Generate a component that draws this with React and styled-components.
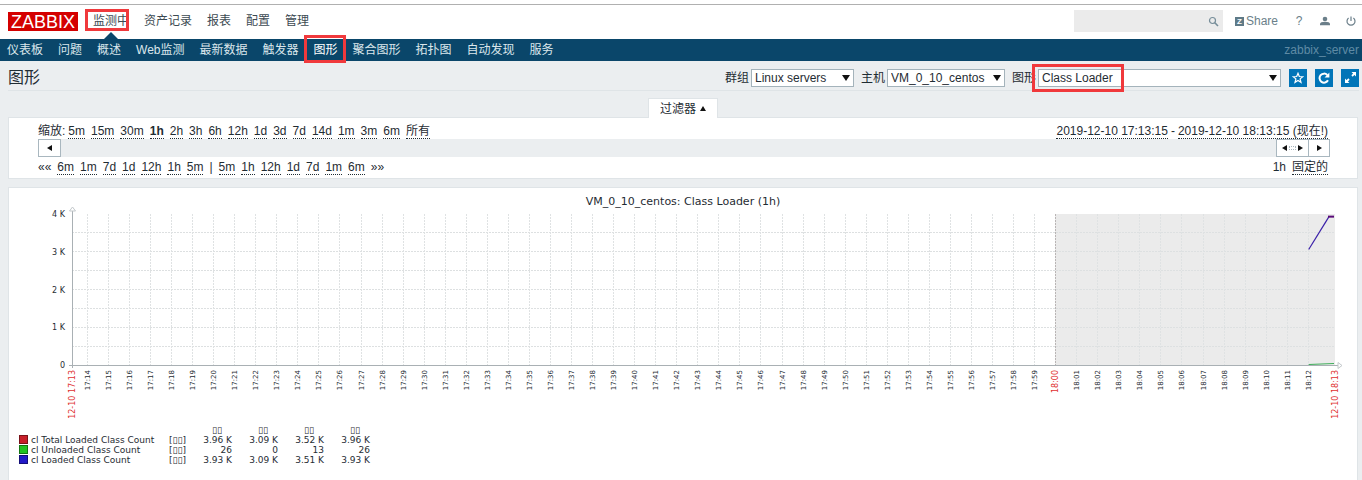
import React, { useLayoutEffect, useRef, useState } from 'react';
import styled, { createGlobalStyle, css } from 'styled-components';

const GlobalStyle = createGlobalStyle`
  *, *::before, *::after { box-sizing: border-box; }
  body {
    margin: 0;
    background: #ebeef0;
    color: #1f2c33;
    font: 12px/14px "Liberation Sans", "Noto Sans CJK SC", sans-serif;
  }
  button, input, select { font: inherit; color: inherit; margin: 0; }
  a { color: inherit; text-decoration: none; }
`;

const marked = css`
  position: relative;
  &::after {
    content: '';
    position: absolute;
    inset: ${(p) => p.$mark};
    border: 3px solid #f0393c;
    pointer-events: none;
    z-index: 2;
  }
`;

const Header = styled.header`
  display: flex;
  align-items: center;
  height: 39px;
  padding: 1px 6px 2px 8px;
  background: #fff;
  border-top: 4px solid #fff;
  box-shadow: inset 0 1px 0 #b0b0b0;
`;

const Logo = styled.a`
  width: 70px;
  height: 19px;
  margin-right: 15px;
  background: #d40000;
  color: #fff;
  font-size: 18px;
  line-height: 20px;
  text-align: center;
`;

const MainNav = styled.nav`
  display: flex;
  gap: 15px;
  flex: 1;
`;

const MainLink = styled.a`
  color: #3c4a52;
  line-height: 16px;
  ${(p) => p.$mark && marked}
  ${(p) => p.$active && css`
    &::before {
      content: '';
      position: absolute;
      left: 50%;
      top: 19px;
      margin-left: -7px;
      border: 7px solid transparent;
      border-top: 0;
      border-bottom-color: #0a466a;
    }
  `}
`;

const Search = styled.form`
  display: flex;
  align-items: center;
  width: 149px;
  height: 22px;
  padding-right: 4px;
  background: #ebebeb;
`;

const SearchInput = styled.input`
  flex: 1;
  min-width: 0;
  height: 22px;
  border: 0;
  background: none;
  outline: none;
`;

const PlainButton = styled.button`
  display: flex;
  padding: 0;
  border: 0;
  background: none;
  color: #768d99;
`;

const UserLinks = styled.div`
  display: flex;
  align-items: center;
  gap: 16px;
  padding-left: 12px;
  color: #6b7f8a;
`;

const UserLink = styled.a`
  display: flex;
  align-items: center;
  gap: 2px;
  min-width: 10px;
  justify-content: center;
`;

const ZBadge = styled.span`
  width: 9px;
  height: 9px;
  background: #5f7a87;
  color: #fff;
  font-size: 8px;
  font-weight: bold;
  line-height: 9px;
  text-align: center;
`;

const SubNav = styled.nav`
  display: flex;
  align-items: center;
  gap: 15px;
  height: 22px;
  padding: 0 3px 0 7px;
  background: #0a466a;
  color: #dbe6ec;
`;

const SubLink = styled.a`
  line-height: 22px;
  color: ${(p) => (p.$mark ? '#fff' : 'inherit')};
  ${(p) => p.$mark && marked}
`;

const ServerName = styled.span`
  margin-left: auto;
  color: #5f8ba5;
`;

const TitleBar = styled.div`
  display: flex;
  align-items: center;
  gap: 7px;
  height: 30px;
  margin: 0 3px 0 8px;
  padding-top: 4px;
  border-bottom: 1px solid #dfe4e7;
`;

const Title = styled.h1`
  flex: 1;
  margin: 0;
  font-size: 16px;
  font-weight: normal;
  line-height: 24px;
`;

const Field = styled.div`
  display: flex;
  align-items: center;
  gap: 2px;
`;

const SelectBox = styled.div`
  width: ${(p) => p.$width}px;
  position: relative;
  &::before {
    content: '';
    position: absolute;
    right: 4px;
    top: 6px;
    border: 4px solid transparent;
    border-top: 6px solid #111;
    border-bottom: 0;
    pointer-events: none;
  }
  ${(p) => p.$mark && marked}
`;

const Select = styled.select`
  display: block;
  width: 100%;
  height: 18px;
  padding: 0 16px 0 3px;
  border: 1px solid #a4b3bb;
  border-radius: 0;
  background: #fff;
  appearance: none;
  line-height: 16px;
`;

const Actions = styled.div`
  display: flex;
  gap: 8px;
  padding-left: 1px;
`;

const IconButton = styled.button`
  display: flex;
  align-items: center;
  justify-content: center;
  width: 18px;
  height: 18px;
  padding: 0;
  border: 0;
  background: #0275b8;
  color: #fff;
`;

const TabRow = styled.div`
  display: flex;
  justify-content: center;
  padding: 7px 0 0 4px;
`;

const FilterTab = styled.button`
  display: flex;
  align-items: center;
  justify-content: center;
  gap: 4px;
  width: 70px;
  height: 20px;
  margin-bottom: -1px;
  padding: 0;
  border: 1px solid #dfe4e7;
  border-bottom: 0;
  background: #fff;
`;

const UpArrow = styled.span`
  border: 3px solid transparent;
  border-top: 0;
  border-bottom: 5px solid #111;
`;

const Panel = styled.section`
  margin: 0 4px 0 8px;
  background: #fff;
  border: 1px solid #dfe4e7;
`;

const FilterPanel = styled(Panel)`
  padding: 6px 29px 3px 29px;
`;

const Row = styled.div`
  display: flex;
  justify-content: space-between;
  height: 15px;
`;

const LinkGroup = styled.div`
  display: flex;
  gap: ${(p) => (p.$tight ? 3 : 6)}px;
`;

const Prefix = styled.span`
  margin-right: -3px;
`;

const TimeLink = styled.a`
  height: 15px;
  border-bottom: 1px dotted #1f2c33;
  font-weight: ${(p) => (p.$selected ? 'bold' : 'normal')};
`;

const Scrollbar = styled.div`
  display: flex;
  justify-content: space-between;
  height: 18px;
  margin: 0 -2px 3px 1px;
  background: #ebeef0;
`;

const Thumbs = styled.div`
  display: flex;
`;

const ScrollButton = styled.button`
  display: flex;
  align-items: center;
  justify-content: center;
  gap: 2px;
  width: ${(p) => p.$width}px;
  margin-left: -1px;
  padding: 0;
  border: 1px solid #a9b7bf;
  background: #fff;
`;

const Tri = styled.span`
  border: 3px solid transparent;
  ${(p) => (p.$left
    ? 'border-left: 0; border-right: 5px solid #111;'
    : 'border-right: 0; border-left: 5px solid #111;')}
`;

const Grip = styled.span`
  width: 7px;
  height: 4px;
  border: 1px dotted #a9b7bf;
`;

const GraphPanel = styled(Panel)`
  margin-top: 8px;
  min-height: 293px;
  border-bottom: 0;
  font-family: "DejaVu Sans", sans-serif;
`;

const Chart = styled.svg`
  display: block;
  width: 100%;
  height: 237px;
`;

const Legend = styled.table`
  margin-left: 10px;
  border-collapse: collapse;
  font-size: 9px;
  line-height: 10px;
  th, td { padding: 0; font-weight: normal; height: 10px; }
`;

const NameCell = styled.td`
  width: 150px;
`;

const Swatch = styled.span`
  display: inline-block;
  width: 9px;
  height: 9px;
  margin-right: 3px;
  border: 1px solid rgba(0, 0, 0, 0.4);
  background: ${(p) => p.$color};
  vertical-align: top;
`;

const KindCell = styled.td`
  width: 17px;
`;

const ValueCell = styled.td`
  width: 46px;
  text-align: right;
`;

const HeadCell = styled.th`
  && { padding-right: 10px; }
  text-align: right;
`;

const SearchIcon = () => (
  <svg width="11" height="11" viewBox="0 0 11 11" fill="none" stroke="currentColor">
    <circle cx="4.5" cy="4.5" r="3" strokeWidth="1.2" />
    <path d="M6.8 6.8 10 10" strokeWidth="1.6" />
  </svg>
);
const UserIcon = () => (
  <svg width="10" height="10" viewBox="0 0 10 10" fill="currentColor">
    <circle cx="5" cy="3" r="2.3" />
    <path d="M0 9.2V8c0-1.4 2-2.2 5-2.2S10 6.6 10 8v1.2z" />
  </svg>
);
const PowerIcon = () => (
  <svg width="10" height="10" viewBox="0 0 10 10" fill="none" stroke="currentColor" strokeWidth="1.2">
    <path d="M2.6 2A4 4 0 1 0 7.4 2M5 0.5V5" />
  </svg>
);
const StarIcon = () => (
  <svg width="12" height="12" viewBox="0 0 12 12" fill="none" stroke="currentColor" strokeWidth="1.2">
    <path d="M6 1.3 7.3 4.5 10.8 4.7 8.1 6.9 9 10.3 6 8.4 3 10.3 3.9 6.9 1.2 4.7 4.7 4.5Z" />
  </svg>
);
const RefreshIcon = () => (
  <svg width="12" height="12" viewBox="0 0 12 12" fill="none" stroke="currentColor" strokeWidth="2">
    <path d="M10 8.3A4.5 4.5 0 1 1 9.3 3" />
    <path d="M11.4 0.6V5.4H6.6Z" fill="currentColor" stroke="none" />
  </svg>
);
const ExpandIcon = () => (
  <svg width="13" height="13" viewBox="0 0 13 13" fill="currentColor" stroke="currentColor">
    <path d="M7.5 1H12V5.5ZM1 7.5V12H5.5Z" stroke="none" />
    <path d="M10.5 2.5 8 5M2.5 10.5 5 8" strokeWidth="1.8" />
  </svg>
);

const MAIN = ['监测中', '资产记录', '报表', '配置', '管理'];
const SUB = ['仪表板', '问题', '概述', 'Web监测', '最新数据', '触发器', '图形', '聚合图形', '拓扑图', '自动发现', '服务'];
const ZOOM = ['5m', '15m', '30m', '1h', '2h', '3h', '6h', '12h', '1d', '3d', '7d', '14d', '1m', '3m', '6m', '所有'];
const BACK = ['6m', '1m', '7d', '1d', '12h', '1h', '5m'];
const FORWARD = ['5m', '1h', '12h', '1d', '7d', '1m', '6m'];
const LEGEND = [
  ['cl Total Loaded Class Count', '#c8202a', ['3.96 K', '3.09 K', '3.52 K', '3.96 K']],
  ['cl Unloaded Class Count', '#22c322', ['26', '0', '13', '26']],
  ['cl Loaded Class Count', '#2219c8', ['3.93 K', '3.09 K', '3.51 K', '3.93 K']],
];

const LEFT = 63;
const TOP = 26;
const BASE = 177;

function Graph() {
  const ref = useRef(null);
  const [width, setWidth] = useState(1348);
  useLayoutEffect(() => {
    const measure = () => setWidth(Math.round(ref.current.getBoundingClientRect().width));
    measure();
    window.addEventListener('resize', measure);
    return () => window.removeEventListener('resize', measure);
  }, []);
  const right = width - 22;
  const x = (minute) => LEFT + ((right - LEFT) * minute) / 60;
  const y = (value) => BASE - ((BASE - TOP) * value) / 4;
  const px = (n) => Math.floor(n) + 0.5;
  const ticks = Array.from({ length: 59 }, (_, i) => ({ at: i + 0.73, minute: 14 + i }));
  const label = (m) => `${17 + Math.floor(m / 60)}:${String(m % 60).padStart(2, '0')}`;
  const shade = Math.floor(x(46.73));

  return (
    <Chart ref={ref} role="img" aria-label="VM_0_10_centos: Class Loader (1h)" fill="#1f2c33">
      <text x={width / 2} y="17" textAnchor="middle" fontSize="11">VM_0_10_centos: Class Loader (1h)</text>
      <rect x={shade} y={TOP} width={right - shade} height={BASE - TOP} fill="#ebebeb" />
      {[0.5, 1, 1.5, 2, 2.5, 3, 3.5].map((v) => (
        <line key={v} x1={LEFT} x2={right} y1={px(y(v))} y2={px(y(v))} stroke="#dde0e1" strokeDasharray="2 1" />
      ))}
      {ticks.map((t) => (
        <g key={t.at}>
          <line x1={px(x(t.at))} x2={px(x(t.at))} y1={TOP} y2={BASE} stroke={t.minute === 60 ? '#b9b5b5' : '#dfe2e3'} strokeDasharray="2 1" />
          <text
            transform={`translate(${Math.floor(x(t.at)) + 3} 182) rotate(-90)`}
            textAnchor="end"
            fontSize={t.minute === 60 ? 8 : 7}
            fill={t.minute === 60 ? '#e03030' : '#1f2c33'}
          >
            {label(t.minute)}
          </text>
        </g>
      ))}
      {[[LEFT, '12-10 17:13'], [right, '12-10 18:13']].map(([at, text]) => (
        <text key={text} transform={`translate(${at + 3} 182) rotate(-90)`} textAnchor="end" fontSize="8" fill="#e03030">{text}</text>
      ))}
      {[0, 1, 2, 3, 4].map((v) => (
        <text key={v} x={LEFT - 7} y={Math.round(y(v)) + 3} textAnchor="end" fontSize="8">{v ? `${v} K` : '0'}</text>
      ))}
      <path d={`M${LEFT + 0.5} ${TOP - 4}V${BASE + 3}M${LEFT - 3} ${BASE + 0.5}H${right + 3}`} stroke="#a9b0b4" fill="none" />
      <path d={`M${LEFT - 2.5} ${TOP - 3}h6l-3 -4zM${right + 3} ${BASE - 2.5}v6l4 -3z`} fill="#fff" stroke="#c3c8cb" />
      <path d={`M${x(58.75)} ${BASE - 0.5}L${right - 1} ${BASE - 1.5}`} stroke="#3fae5a" fill="none" />
      <path d={`M${x(58.75)} ${y(3.06)}L${right - 6} ${y(3.93)}`} stroke="#3a1fa8" strokeWidth="1.2" fill="none" />
      <path d={`M${right - 7} ${y(3.93)}H${right - 1}`} stroke="#5a0a78" strokeWidth="2" fill="none" />
    </Chart>
  );
}

const Links = ({ items, selected }) => items.map((t) => (
  <TimeLink key={t} href="#" $selected={t === selected}>{t}</TimeLink>
));

function Picker({ id, label, value, width, mark }) {
  return (
    <Field>
      <label htmlFor={id}>{label}</label>
      <SelectBox $width={width} $mark={mark}>
        <Select id={id} defaultValue={value}><option>{value}</option></Select>
      </SelectBox>
    </Field>
  );
}

export default function App() {
  return (
    <>
      <GlobalStyle />
      <Header>
        <Logo href="#">ZABBIX</Logo>
        <MainNav>
          {MAIN.map((t, i) => (
            <MainLink key={t} href="#" $active={i === 0} $mark={i === 0 ? '-4px 0 -2px -8px' : undefined}>{t}</MainLink>
          ))}
        </MainNav>
        <Search onSubmit={(e) => e.preventDefault()}>
          <SearchInput type="text" aria-label="搜索" />
          <PlainButton type="submit" aria-label="搜索"><SearchIcon /></PlainButton>
        </Search>
        <UserLinks>
          <UserLink href="#"><ZBadge>Z</ZBadge>Share</UserLink>
          <UserLink href="#">?</UserLink>
          <UserLink href="#" aria-label="用户"><UserIcon /></UserLink>
          <UserLink href="#" aria-label="退出"><PowerIcon /></UserLink>
        </UserLinks>
      </Header>
      <SubNav>
        {SUB.map((t) => (
          <SubLink key={t} href="#" $mark={t === '图形' ? '-4px -8px -2px -10px' : undefined}>{t}</SubLink>
        ))}
        <ServerName>zabbix_server</ServerName>
      </SubNav>
      <TitleBar>
        <Title>图形</Title>
        <Picker id="group" label="群组" value="Linux servers" width={103} />
        <Picker id="host" label="主机" value="VM_0_10_centos" width={118} />
        <Picker id="graph" label="图形" value="Class Loader" width={243} mark="-5px 157px -5px -6px" />
        <Actions>
          <IconButton aria-label="收藏"><StarIcon /></IconButton>
          <IconButton aria-label="刷新"><RefreshIcon /></IconButton>
          <IconButton aria-label="全屏"><ExpandIcon /></IconButton>
        </Actions>
      </TitleBar>
      <TabRow><FilterTab>过滤器<UpArrow /></FilterTab></TabRow>
      <FilterPanel>
        <Row>
          <LinkGroup><Prefix>缩放:</Prefix><Links items={ZOOM} selected="1h" /></LinkGroup>
          <LinkGroup $tight>
            <TimeLink href="#">2019-12-10 17:13:15</TimeLink>
            <span>-</span>
            <TimeLink href="#">2019-12-10 18:13:15 (现在!)</TimeLink>
          </LinkGroup>
        </Row>
        <Scrollbar>
          <ScrollButton $width={23} aria-label="向左"><Tri $left /></ScrollButton>
          <Thumbs>
            <ScrollButton $width={33} aria-label="时间段"><Tri $left /><Grip /><Tri /></ScrollButton>
            <ScrollButton $width={22} aria-label="向右"><Tri /></ScrollButton>
          </Thumbs>
        </Scrollbar>
        <Row>
          <LinkGroup>
            <span>««</span>
            <Links items={BACK} />
            <span>|</span>
            <Links items={FORWARD} />
            <span>»»</span>
          </LinkGroup>
          <LinkGroup><span>1h</span><TimeLink href="#">固定的</TimeLink></LinkGroup>
        </Row>
      </FilterPanel>
      <GraphPanel>
        <Graph />
        <Legend>
          <thead>
            <tr>
              <td colSpan={2} />
              {[0, 1, 2, 3].map((i) => <HeadCell key={i} scope="col">▯▯</HeadCell>)}
            </tr>
          </thead>
          <tbody>
            {LEGEND.map(([name, color, values]) => (
              <tr key={name}>
                <NameCell><Swatch $color={color} />{name}</NameCell>
                <KindCell>[▯▯]</KindCell>
                {values.map((v, i) => <ValueCell key={i}>{v}</ValueCell>)}
              </tr>
            ))}
          </tbody>
        </Legend>
      </GraphPanel>
    </>
  );
}
